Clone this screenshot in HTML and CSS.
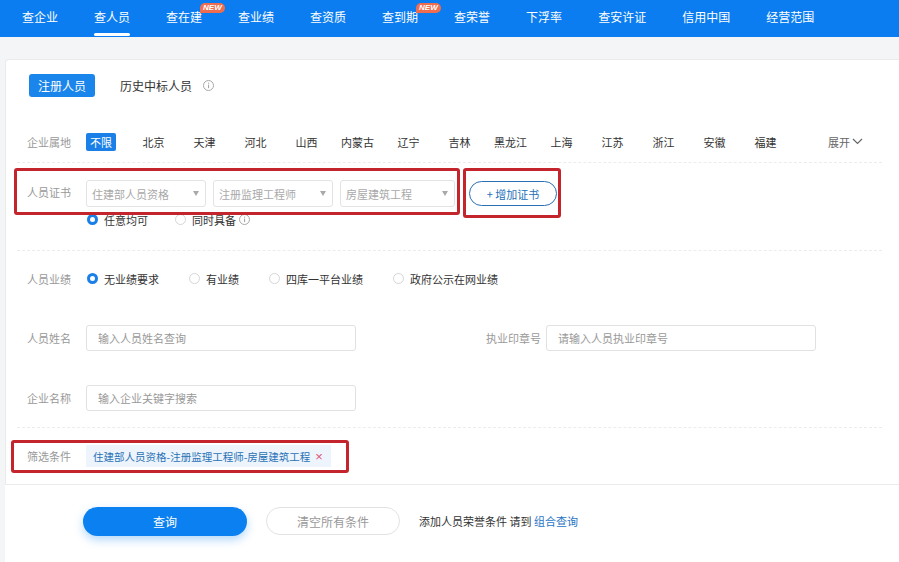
FILE: index.html
```html
<!DOCTYPE html>
<html lang="zh-CN">
<head>
<meta charset="utf-8">
<title>查人员</title>
<link rel="stylesheet" href="styles.css">
</head>
<body>
<nav class="nav">
  <a class="nav-item">查企业</a>
  <a class="nav-item active">查人员</a>
  <a class="nav-item">查在建<span class="badge">NEW</span></a>
  <a class="nav-item">查业绩</a>
  <a class="nav-item">查资质</a>
  <a class="nav-item">查到期<span class="badge">NEW</span></a>
  <a class="nav-item">查荣誉</a>
  <a class="nav-item">下浮率</a>
  <a class="nav-item">查安许证</a>
  <a class="nav-item">信用中国</a>
  <a class="nav-item">经营范围</a>
</nav>

<section class="card">
  <div class="tabs">
    <span class="tab tab-active">注册人员</span>
    <span class="tab">历史中标人员</span>
    <svg class="info info-tab" width="11" height="11" viewBox="0 0 11 11"><circle cx="5.5" cy="5.5" r="5" fill="none" stroke="#a8a8a8" stroke-width="1"/><rect x="5" y="4.6" width="1.1" height="3.6" fill="#a8a8a8"/><rect x="5" y="2.6" width="1.1" height="1.1" fill="#a8a8a8"/></svg>
  </div>

  <div class="form">
    <div class="row row-region">
      <span class="label">企业属地</span>
      <span class="all">不限</span>
      <span class="prov">北京</span>
      <span class="prov">天津</span>
      <span class="prov">河北</span>
      <span class="prov">山西</span>
      <span class="prov">内蒙古</span>
      <span class="prov">辽宁</span>
      <span class="prov">吉林</span>
      <span class="prov">黑龙江</span>
      <span class="prov">上海</span>
      <span class="prov">江苏</span>
      <span class="prov">浙江</span>
      <span class="prov">安徽</span>
      <span class="prov">福建</span>
      <span class="expand">展开<svg width="11" height="7" viewBox="0 0 11 7"><polyline points="1,1 5.5,5.5 10,1" fill="none" stroke="#666" stroke-width="1.2"/></svg></span>
    </div>

    <div class="row row-cert">
      <span class="label label-top">人员证书</span>
      <div class="cert-body">
        <div class="selects">
          <div class="select">住建部人员资格<i class="caret"></i></div>
          <div class="select">注册监理工程师<i class="caret"></i></div>
          <div class="select select-short">房屋建筑工程<i class="caret"></i></div>
          <button class="add-btn">+ 增加证书</button>
        </div>
        <div class="radios radios-small">
          <span class="radio on"><i></i>任意均可</span>
          <span class="radio"><i></i>同时具备<svg class="info" width="11" height="11" viewBox="0 0 11 11"><circle cx="5.5" cy="5.5" r="5" fill="none" stroke="#a8a8a8" stroke-width="1"/><rect x="5" y="4.6" width="1.1" height="3.6" fill="#a8a8a8"/><rect x="5" y="2.6" width="1.1" height="1.1" fill="#a8a8a8"/></svg></span>
        </div>
      </div>
    </div>

    <div class="row row-perf">
      <span class="label">人员业绩</span>
      <div class="radios">
        <span class="radio on"><i></i>无业绩要求</span>
        <span class="radio"><i></i>有业绩</span>
        <span class="radio"><i></i>四库一平台业绩</span>
        <span class="radio"><i></i>政府公示在网业绩</span>
      </div>
    </div>

    <div class="row row-name">
      <span class="label">人员姓名</span>
      <div class="input">输入人员姓名查询</div>
      <span class="label-right">执业印章号</span>
      <div class="input">请输入人员执业印章号</div>
    </div>

    <div class="row row-company">
      <span class="label">企业名称</span>
      <div class="input">输入企业关键字搜索</div>
    </div>

    <div class="row row-filter">
      <span class="label">筛选条件</span>
      <span class="tag">住建部人员资格-注册监理工程师-房屋建筑工程<b class="tag-x">×</b></span>
    </div>
  </div>

  <div class="mark mark-1"></div>
  <div class="mark mark-2"></div>
  <div class="mark mark-3"></div>
</section>

<section class="actions">
  <button class="btn-primary">查询</button>
  <button class="btn-ghost">清空所有条件</button>
  <span class="hint">添加人员荣誉条件 请到 <a class="link">组合查询</a></span>
</section>
</body>
</html>
```

FILE: styles.css
```css
* { box-sizing: border-box; margin: 0; padding: 0; }

body {
  width: 899px;
  height: 562px;
  overflow: hidden;
  background: #f4f5f7;
  color: #333;
  font-family: "Noto Sans CJK SC", "Noto Sans", sans-serif;
  font-size: 11px;
}

/* ---------- top nav ---------- */
.nav {
  height: 37px;
  background: #0b7df0;
  display: flex;
  gap: 36px;
  padding-left: 22px;
}
.nav-item {
  position: relative;
  color: #fff;
  font-size: 12px;
  line-height: 34px;
  height: 37px;
  white-space: nowrap;
}
.nav-item.active::after {
  content: "";
  position: absolute;
  left: 0;
  right: 0;
  bottom: 1px;
  height: 3px;
  border-radius: 2px;
  background: #fff;
}
.badge {
  position: absolute;
  left: 34px;
  top: 3px;
  height: 10px;
  padding: 0 3px;
  border-radius: 5px 5px 5px 0;
  background: #ef6d4f;
  color: #fff;
  font-family: "Liberation Sans", sans-serif;
  font-size: 8px;
  font-weight: bold;
  font-style: italic;
  line-height: 10px;
}

/* ---------- card ---------- */
.card {
  position: relative;
  margin: 22px 0 0 5px;
  height: 426px;
  background: #fff;
  border: 1px solid #ebebeb;
  border-right: none;
  border-radius: 4px 0 0 0;
  padding-top: 14px;
}

.tabs {
  display: flex;
  align-items: center;
  padding-left: 23px;
  height: 23px;
}
.tab {
  font-size: 12px;
  color: #333;
  margin-right: 25px;
}
.tab-active {
  height: 23px;
  line-height: 23px;
  padding: 0 9px;
  border-radius: 3px;
  background: #1a85ea;
  color: #fff;
}
.info-tab { margin-left: -14px; }

.form {
  margin: 24px 17px 0 11px;
}
.row {
  display: flex;
  align-items: center;
  padding-left: 10px;
}
.label {
  width: 59px;
  flex-shrink: 0;
  color: #999;
}

.row-region {
  height: 42px;
  border-bottom: 1px dashed #ececec;
}
.all {
  width: 30px;
  height: 18px;
  line-height: 18px;
  text-align: center;
  border-radius: 2px;
  background: #1a7fe6;
  color: #fff;
  margin-right: 12px;
}
.prov {
  width: 51px;
  text-align: center;
  color: #333;
}
.expand {
  margin-left: 37px;
  color: #666;
  display: inline-flex;
  align-items: center;
  gap: 2px;
}

.row-cert {
  height: 88px;
  align-items: flex-start;
  padding-top: 17px;
  border-bottom: 1px dashed #ececec;
}
.label-top { line-height: 25px; }
.cert-body { display: flex; flex-direction: column; }
.selects {
  display: flex;
  gap: 7px;
  align-items: center;
}
.select {
  width: 120px;
  height: 27px;
  border: 1px solid #e3e3e3;
  border-radius: 3px;
  display: flex;
  align-items: center;
  justify-content: space-between;
  padding: 0 6px 0 5px;
  color: #a9a9a9;
}
.select-short { width: 115px; }
.caret {
  width: 0;
  height: 0;
  border-left: 3.5px solid transparent;
  border-right: 3.5px solid transparent;
  border-top: 5px solid #a9a9a9;
}
.add-btn {
  margin-left: 7px;
  width: 88px;
  height: 25px;
  border: 1px solid #2b70b2;
  border-radius: 13px;
  background: #fff;
  color: #2470b8;
  font-family: inherit;
  font-size: 11px;
}

.radios {
  display: flex;
  align-items: center;
  gap: 30px;
  margin-left: 1px;
}
.radios-small {
  margin-top: 6px;
  gap: 27px;
  height: 13px;
}
.radio {
  display: inline-flex;
  align-items: center;
  gap: 6px;
  color: #333;
}
.radio i {
  width: 11px;
  height: 11px;
  border-radius: 50%;
  border: 1px solid #d6d6d6;
  background: #fff;
}
.radio.on i { border: 3px solid #1a7fe6; }
.radio .info { margin-left: -3px; }

.row-perf { height: 55px; }

.input {
  width: 270px;
  height: 26px;
  border: 1px solid #e1e1e1;
  border-radius: 3px;
  padding-left: 11px;
  line-height: 24px;
  color: #999;
}
.row-name { height: 63px; }
.label-right {
  margin-left: 130px;
  margin-right: 5px;
  color: #999;
}
.row-company {
  height: 59px;
  border-bottom: 1px dashed #ececec;
}
.row-filter { height: 56px; }
.tag {
  display: inline-flex;
  align-items: center;
  gap: 5px;
  height: 22px;
  padding: 0 8px 0 7px;
  background: #edf4fc;
  color: #2a72b5;
  font-size: 10.5px;
}
.tag-x {
  font-family: "Liberation Sans", sans-serif;
  font-weight: normal;
  font-size: 13px;
  color: #e05579;
}

/* annotation boxes */
.mark {
  position: absolute;
  border: 3px solid #c4242b;
  border-radius: 3px;
}
.mark-1 { left: 8px; top: 108px; width: 446px; height: 47px; }
.mark-2 { left: 457px; top: 108px; width: 98px; height: 50px; }
.mark-3 { left: 5px; top: 380px; width: 338px; height: 33px; }

/* ---------- actions ---------- */
.actions {
  margin-left: 5px;
  height: 77px;
  background: #fff;
  display: flex;
  align-items: flex-start;
  gap: 19px;
  padding: 22px 0 0 78px;
}
.btn-primary {
  width: 164px;
  height: 29px;
  border: none;
  border-radius: 15px;
  background: #0b80f0;
  color: #fff;
  font-family: inherit;
  font-size: 12px;
  box-shadow: 0 4px 10px rgba(11, 128, 240, 0.3);
}
.btn-ghost {
  width: 134px;
  height: 28px;
  border: 1px solid #e2e2e2;
  border-radius: 14px;
  background: #fff;
  color: #999;
  font-family: inherit;
  font-size: 12px;
}
.hint {
  line-height: 29px;
  color: #333;
}
.link { color: #1f74c4; }
```
